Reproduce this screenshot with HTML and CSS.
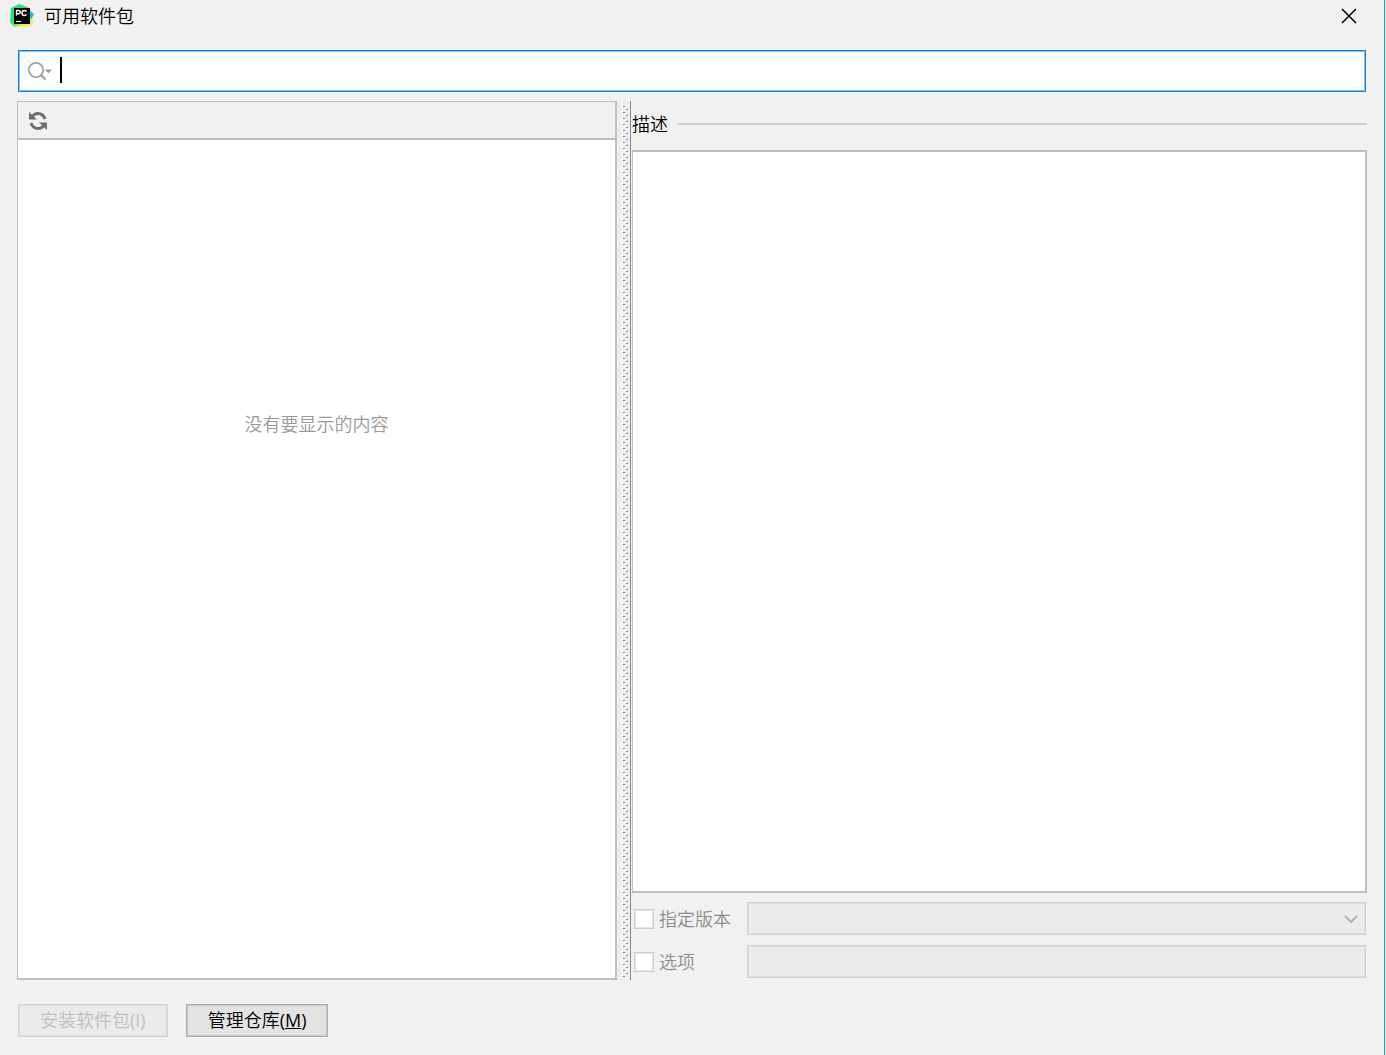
FILE: index.html
```html
<!DOCTYPE html>
<html lang="zh-CN">
<head>
<meta charset="utf-8">
<title>可用软件包</title>
<link rel="stylesheet" href="styles.css">
</head>
<body>
<div class="dialog">
  <header class="titlebar">
    <svg class="logo" viewBox="0 0 24 24" aria-hidden="true">
      <defs>
        <linearGradient id="g" x1="0" y1="0" x2="1" y2="1">
          <stop offset="0" stop-color="#21d789"/><stop offset=".45" stop-color="#3be36c"/><stop offset=".75" stop-color="#e6f23c"/><stop offset="1" stop-color="#fcf84a"/>
        </linearGradient>
      </defs>
      <path d="M1 4L9 0l9 3 4 5 1 12-6 3-7-1-6 1-4-5z" fill="url(#g)"/>
      <path d="M20 7l4 3-2 4-2 1z" fill="#07c3f2"/>
      <rect x="4" y="4" width="16" height="16" fill="#000"/>
      <path d="M6.500 11.500V6.500h2q1.800 0 1.800 1.600T8.500 9.700H6.500M16.500 7.500q-1-1-2.200-1Q12 6.500 12 9t2.300 2.500q1.200 0 2.200-1" fill="none" stroke="#fff" stroke-width="1.400"/>
      <path d="M6 17.500h5" stroke="#fff" stroke-width="1.200"/>
    </svg>
    <h1 class="title">可用软件包</h1>
    <button class="close" type="button" aria-label="关闭">
      <svg viewBox="0 0 16 16"><path d="M1 1l14 14M15 1L1 15" stroke="#000" stroke-width="1.500" fill="none"/></svg>
    </button>
  </header>

  <main class="content">
    <div class="search">
      <svg class="search-icon" viewBox="0 0 26 20" aria-hidden="true">
        <circle cx="9" cy="9" r="7.200" fill="none" stroke="#9aa1a7" stroke-width="1.700"/>
        <path d="M13.500 13.500l5 5" stroke="#9aa1a7" stroke-width="2.200"/>
        <path d="M18 8.500h7l-3.500 4z" fill="#9aa1a7"/>
      </svg>
      <span class="caret"></span>
      <input class="search-input" type="text" aria-label="搜索软件包">
    </div>

    <div class="split">
      <section class="packages">
        <div class="toolbar">
          <button class="refresh" type="button" aria-label="刷新">
            <svg viewBox="0 0 20 20">
              <path d="M3 7.500Q5.500 2.500 10 2.500q5 0 7 5.500M17 12.500q-2.500 5-7 5-5 0-7-5.500" fill="none" stroke="#6e6e6e" stroke-width="3"/>
              <path d="M1 1v7.500h8zM19 19v-7.500h-8z" fill="#6e6e6e"/>
            </svg>
          </button>
        </div>
        <div class="list"><p class="empty">没有要显示的内容</p></div>
      </section>

      <div class="splitter" role="separator" aria-orientation="vertical">
        <svg class="grip" aria-hidden="true">
          <defs>
            <pattern id="dots" width="11" height="6" patternUnits="userSpaceOnUse">
              <path d="M4 2h2v1h-2zM7 5h2v1h-2z" fill="#7b8b9a"/>
              <path d="M2 0h2v2h-2zM5 3h2v2h-2z" fill="#fff"/>
            </pattern>
          </defs>
          <rect width="11" height="100%" fill="url(#dots)"/>
        </svg>
      </div>

      <section class="details">
        <h2 class="heading">描述</h2>
        <div class="description"></div>
        <div class="options">
          <label class="option"><input class="check" type="checkbox" disabled>指定版本</label>
          <div class="combo">
            <select class="field" aria-label="版本" disabled></select>
            <svg class="chevron" viewBox="0 0 14 8" aria-hidden="true"><path d="M1 1l6 6 6-6" fill="none" stroke="#a6a6a6" stroke-width="1.700"/></svg>
          </div>
          <label class="option"><input class="check" type="checkbox" disabled>选项</label>
          <input class="field" type="text" aria-label="选项内容" disabled>
        </div>
      </section>
    </div>

    <footer class="actions">
      <button class="button" type="button" disabled>安装软件包<span class="mnemonic">(I)</span></button>
      <button class="button" type="button">管理仓库<span class="mnemonic">(<u>M</u>)</span></button>
    </footer>
  </main>
</div>
</body>
</html>
```
FILE: styles.css
```css
* {
  box-sizing: border-box;
}

body {
  margin: 0;
  background: #f1f1f1;
  color: #000;
  font: 350 18px/24px "Open Sans", "Noto Sans CJK SC", sans-serif;
}

.dialog {
  display: flex;
  flex-direction: column;
  min-height: 100vh;
  margin-right: 1px;
  border-right: 1px solid #0aa5c9;
}

.titlebar {
  display: flex;
  align-items: center;
  height: 32px;
  padding: 0 27px 0 10px;
}

.logo {
  width: 24px;
  height: 24px;
  margin-right: 10px;
}

.title,
.heading,
.empty {
  margin: 0;
  font-size: 18px;
  font-weight: inherit;
}

.close {
  display: flex;
  margin-left: auto;
  padding: 0;
  border: 0;
  background: none;
}

.close svg {
  width: 16px;
  height: 16px;
}

.content {
  display: flex;
  flex: 1;
  flex-direction: column;
  padding: 18px 17px 18px;
}

.search {
  display: flex;
  align-items: center;
  height: 42px;
  margin: 0 1px 9px;
  padding-left: 8px;
  border: 1px solid #0b84dd;
  box-shadow: inset 0 0 0 1px #84c0ee;
  background: #fff;
}

.search-icon {
  width: 26px;
  height: 20px;
}

.caret {
  width: 2px;
  height: 26px;
  margin: 0 4px 2px 7px;
  background: #000;
}

.search-input {
  flex: 1;
  align-self: stretch;
  margin: 2px;
  padding: 0;
  border: 0;
  outline: 0;
  background: none;
  font: inherit;
}

.split {
  display: grid;
  flex: 1;
  grid-template-columns: 600fr 15px 735fr;
}

.packages {
  display: flex;
  flex-direction: column;
  border: solid #bfbfbf;
  border-width: 1px 2px 2px 1px;
}

.toolbar {
  display: flex;
  align-items: center;
  height: 38px;
  padding: 2px 0 0 10px;
  border-bottom: 2px solid #bfbfbf;
}

.refresh {
  display: flex;
  padding: 0;
  border: 0;
  background: none;
}

.refresh svg {
  width: 20px;
  height: 20px;
}

.list {
  flex: 1;
  padding-top: 272px;
  background: #fff;
}

.empty {
  color: #999;
  text-align: center;
}

.splitter {
  display: flex;
  margin: 0 1px;
  padding: 3px 0 3px 1px;
  border-right: 1px solid #7b8b9a;
  background: #eee;
}

.grip {
  width: 11px;
  height: 100%;
}

.details {
  display: flex;
  flex-direction: column;
}

.heading {
  display: flex;
  align-items: center;
  gap: 9px;
  height: 49px;
  padding-bottom: 3px;
}

.heading::after {
  flex: 1;
  height: 2px;
  background: #cfcfcf;
  content: "";
}

.description {
  flex: 1;
  border: solid #bfbfbf;
  border-width: 2px 2px 2px 1px;
  background: #fff;
}

.options {
  display: grid;
  grid-template-columns: 106px 1fr;
  row-gap: 10px;
  column-gap: 8px;
  padding: 9px 1px 2px;
}

.option {
  display: flex;
  align-items: center;
  gap: 5px;
  padding-left: 1px;
  color: #8c8c8c;
}

.check {
  width: 20px;
  height: 20px;
  margin: 0;
  appearance: none;
  border: 1px solid #cfcfcf;
  box-shadow: inset 0 0 0 1px #e4e4e4;
  background: #fff;
}

.combo {
  position: relative;
}

.field {
  display: block;
  width: 100%;
  height: 33px;
  padding: 0 8px;
  appearance: none;
  border: 1px solid #cfcfcf;
  border-radius: 0;
  box-shadow: inset 0 0 0 1px #dedede;
  background: #ebebeb;
  font: inherit;
  opacity: 1;
}

.chevron {
  position: absolute;
  top: 13px;
  right: 8px;
  width: 14px;
  height: 8px;
}

.actions {
  display: flex;
  gap: 18px;
  padding: 24px 0 0 1px;
}

.button {
  height: 33px;
  padding: 0 21px 2px;
  border: 1px solid #adadad;
  box-shadow: inset 0 0 0 1px #c8c8c8;
  background: #e3e3e3;
  color: #000;
  font: inherit;
}

.button:disabled {
  border-color: #d2d2d2;
  box-shadow: inset 0 0 0 1px #dedede;
  background: #ebebeb;
  color: #bfbfbf;
}

.mnemonic {
  font-weight: 400;
}
```
